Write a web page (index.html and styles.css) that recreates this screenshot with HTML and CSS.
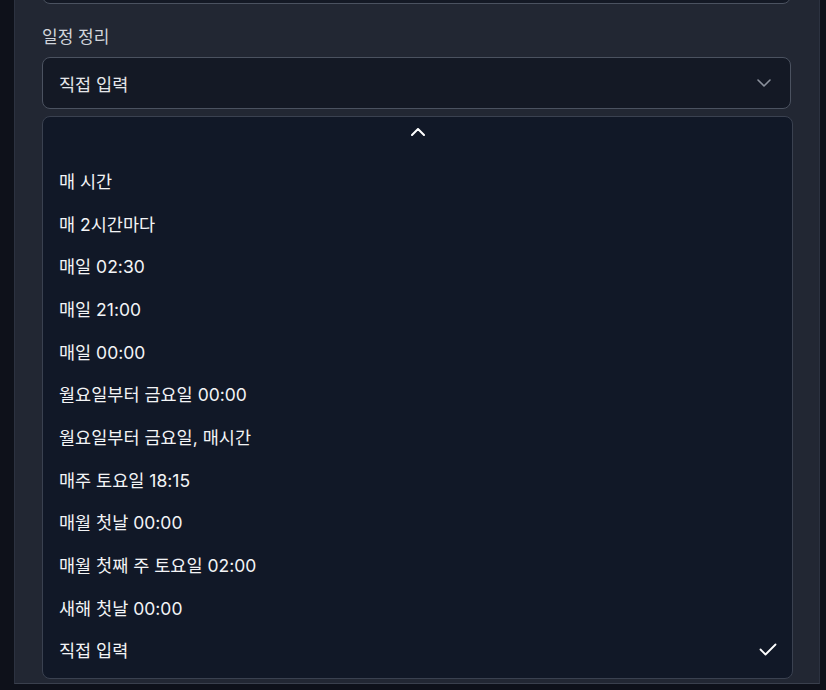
FILE: index.html
```html
<!DOCTYPE html>
<html lang="ko">
<head>
<meta charset="utf-8">
<link rel="stylesheet" href="styles.css">
</head>
<body>
<div class="panel">
  <div class="prev-input"></div>
  <label class="label">일정 정리</label>
  <div class="select">
    <span class="select-value">직접 입력</span>
    <svg class="chev-down" width="14" height="8" viewBox="0 0 14 8"><path d="M1 1l6 6 6-6" fill="none" stroke="currentColor" stroke-width="1.6" stroke-linecap="round" stroke-linejoin="round"/></svg>
  </div>
  <div class="menu">
    <div class="scroll-up">
      <svg width="14" height="8" viewBox="0 0 14 8"><path d="M1 7l6-6 6 6" fill="none" stroke="currentColor" stroke-width="2" stroke-linecap="round" stroke-linejoin="round"/></svg>
    </div>
    <div class="list">
      <div class="item">매 시간</div>
      <div class="item">매 2시간마다</div>
      <div class="item">매일 02:30</div>
      <div class="item">매일 21:00</div>
      <div class="item">매일 00:00</div>
      <div class="item">월요일부터 금요일 00:00</div>
      <div class="item">월요일부터 금요일, 매시간</div>
      <div class="item">매주 토요일 18:15</div>
      <div class="item">매월 첫날 00:00</div>
      <div class="item">매월 첫째 주 토요일 02:00</div>
      <div class="item">새해 첫날 00:00</div>
      <div class="item selected">직접 입력
        <svg class="check" width="18" height="13" viewBox="0 0 18 13"><path d="M1.5 6.5l5 5 10-10" fill="none" stroke="currentColor" stroke-width="1.8" stroke-linecap="round" stroke-linejoin="round"/></svg>
      </div>
    </div>
  </div>
</div>
</body>
</html>
```

FILE: styles.css
```css
html, body {
  margin: 0;
  padding: 0;
  background: #0e111a;
  font-family: Inter, "Noto Sans CJK KR", sans-serif;
  overflow: hidden;
}
.panel {
  box-sizing: border-box;
  margin-left: 14px;
  width: 806px;
  height: 684px;
  background: #222733;
  border-left: 1px solid #2c3240;
  border-right: 1px solid #2c3240;
  border-bottom: 1px solid #3a404d;
  padding-left: 27px;
  display: flex;
  flex-direction: column;
  align-items: flex-start;
  overflow: hidden;
}
.prev-input {
  box-sizing: border-box;
  width: 749px;
  height: 40px;
  margin-top: -36px;
  flex-shrink: 0;
  background: #141925;
  border: 1px solid #4b5260;
  border-radius: 8px;
}
.label {
  margin-top: 21px;
  height: 24px;
  line-height: 24px;
  font-size: 17px;
  color: #d1d5db;
}
.select {
  box-sizing: border-box;
  margin-top: 8px;
  width: 749px;
  height: 52px;
  flex-shrink: 0;
  background: #141925;
  border: 1px solid #4b5260;
  border-radius: 8px;
  display: flex;
  align-items: center;
  justify-content: space-between;
  padding: 0 19px 0 16px;
  color: #e5e7eb;
  font-size: 17.5px;
}
.chev-down {
  color: #8b919c;
}
.menu {
  box-sizing: border-box;
  margin-top: 7px;
  width: 751px;
  height: 563px;
  flex-shrink: 0;
  background: #111827;
  border: 1px solid #3a4150;
  border-radius: 8px;
  display: flex;
  flex-direction: column;
}
.scroll-up {
  height: 42px;
  display: flex;
  justify-content: center;
  align-items: flex-start;
  padding-top: 11px;
  box-sizing: border-box;
  color: #ffffff;
}
.list {
  display: flex;
  flex-direction: column;
}
.item {
  height: 42.7px;
  display: flex;
  align-items: center;
  justify-content: space-between;
  padding: 0 16px;
  font-size: 17.5px;
  color: #f3f4f6;
}
.check {
  color: #ffffff;
  margin-right: -1px;
}
```
